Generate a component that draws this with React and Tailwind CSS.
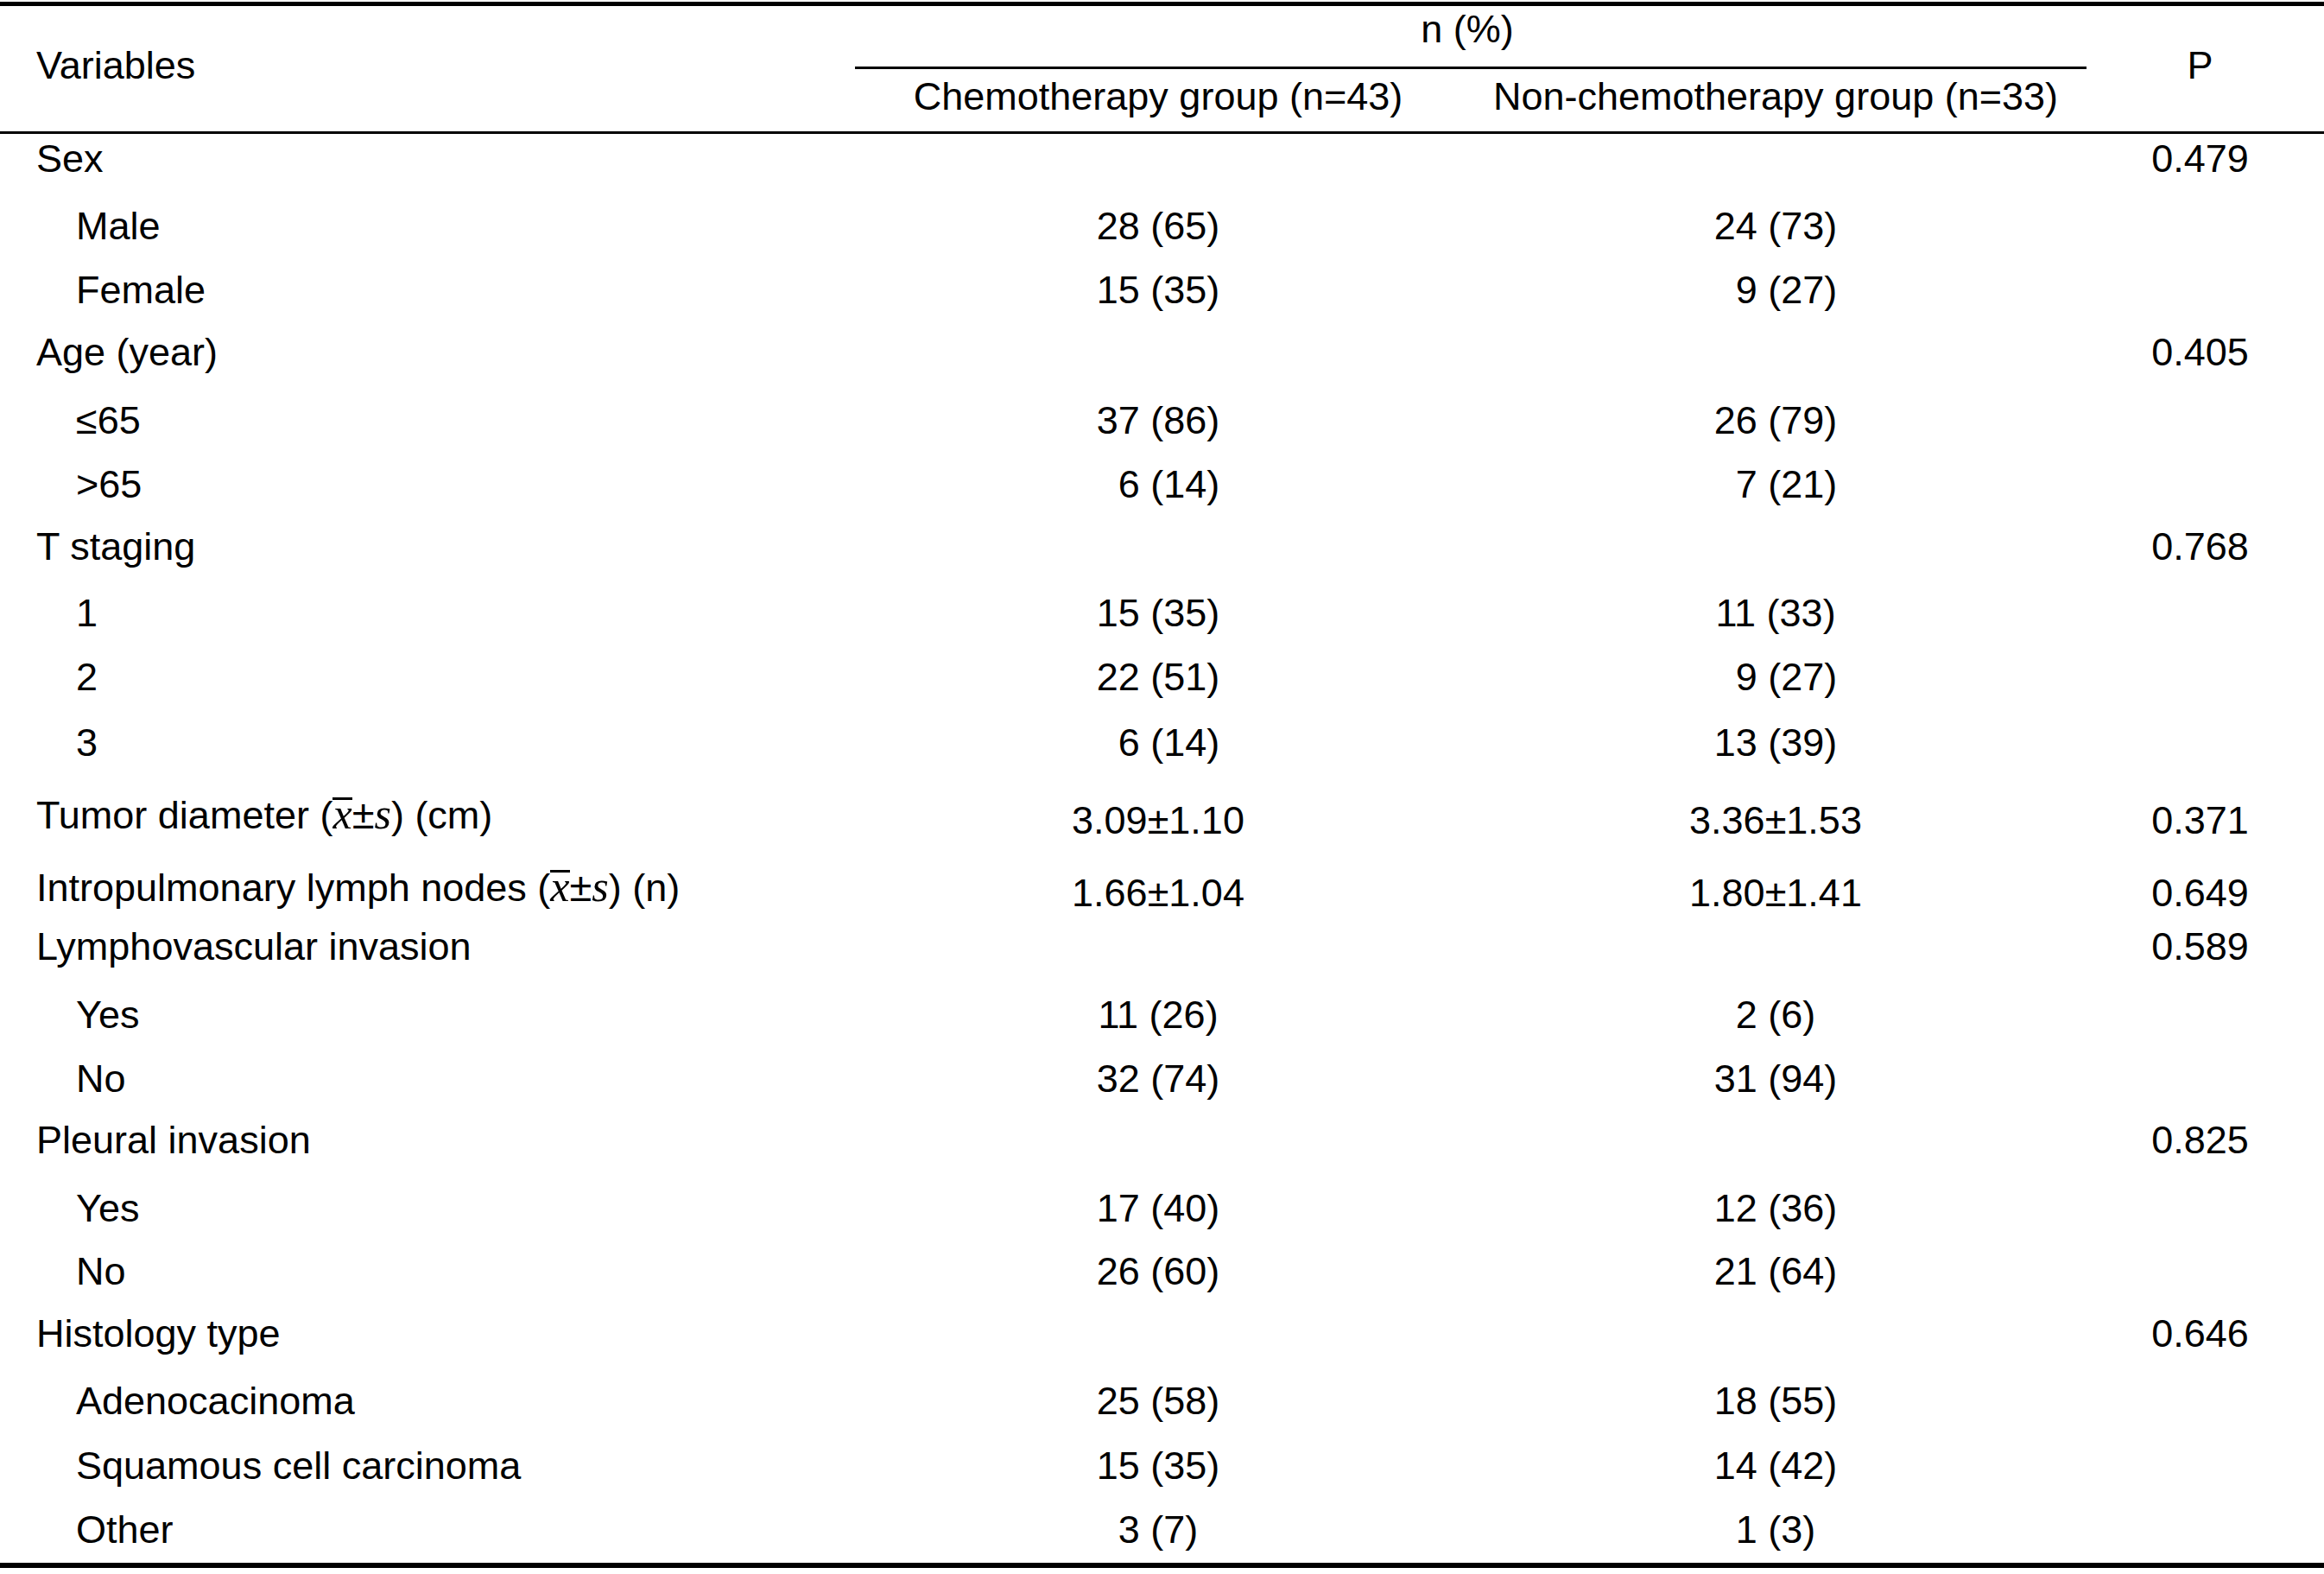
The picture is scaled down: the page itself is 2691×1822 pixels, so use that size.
import React from 'react';

// Baseline characteristics table, chemotherapy vs non-chemotherapy
const rows = [
  { label: 'Sex', p: '0.479', h: 'h-[78px]' },
  { label: 'Male', sub: true, a: '28 (65)', b: '24 (73)', h: 'h-[74px]' },
  { label: 'Female', sub: true, a: '15 (35)', b: '9 (27)', h: 'h-[72px]' },
  { label: 'Age (year)', p: '0.405', h: 'h-[79px]' },
  { label: '≤65', sub: true, a: '37 (86)', b: '26 (79)', h: 'h-[74px]' },
  { label: '>65', sub: true, a: '6 (14)', b: '7 (21)', h: 'h-[72px]' },
  { label: 'T staging', p: '0.768', h: 'h-[77px]' },
  { label: '1', sub: true, a: '15 (35)', b: '11 (33)', h: 'h-[74px]' },
  { label: '2', sub: true, a: '22 (51)', b: '9 (27)', h: 'h-[76px]' },
  { label: '3', sub: true, a: '6 (14)', b: '13 (39)', h: 'h-[82px]' },
  { label: 'tumor', a: '3.09±1.10', b: '3.36±1.53', p: '0.371', h: 'h-[84px]', shift: true },
  { label: 'nodes', a: '1.66±1.04', b: '1.80±1.41', p: '0.649', h: 'h-[70px]', shift: true },
  { label: 'Lymphovascular invasion', p: '0.589', h: 'h-[79px]' },
  { label: 'Yes', sub: true, a: '11 (26)', b: '2 (6)', h: 'h-[74px]' },
  { label: 'No', sub: true, a: '32 (74)', b: '31 (94)', h: 'h-[71px]' },
  { label: 'Pleural invasion', p: '0.825', h: 'h-[79px]' },
  { label: 'Yes', sub: true, a: '17 (40)', b: '12 (36)', h: 'h-[73px]' },
  { label: 'No', sub: true, a: '26 (60)', b: '21 (64)', h: 'h-[72px]' },
  { label: 'Histology type', p: '0.646', h: 'h-[78px]' },
  { label: 'Adenocacinoma', sub: true, a: '25 (58)', b: '18 (55)', h: 'h-[75px]' },
  { label: 'Squamous cell carcinoma', sub: true, a: '15 (35)', b: '14 (42)', h: 'h-[74px]' },
  { label: 'Other', sub: true, a: '3 (7)', b: '1 (3)', h: 'h-[64px]' },
];

const cols = 'grid grid-cols-[990px_712px_714px_275px]';

function MeanSd() {
  return (
    <span className="text-[50px] font-['Liberation_Serif','Times_New_Roman',serif]">
      <span className="inline-block italic leading-[0.64] border-t-[3px] border-black">x</span>
      <span className="font-['Liberation_Sans',Arial,sans-serif] text-[47px]">±</span>
      <span className="italic">s</span>
    </span>
  );
}

function Label({ label }) {
  if (label === 'tumor') {
    return (
      <>
        Tumor diameter (<MeanSd />) (cm)
      </>
    );
  }
  if (label === 'nodes') {
    return (
      <>
        Intropulmonary lymph nodes (<MeanSd />) (n)
      </>
    );
  }
  return label;
}

// single-digit count with two-digit percentage gets a figure-width pad, as in the source
function Val({ v }) {
  if (!v) return null;
  const pad = /^\d \(\d\d\)$/.test(v);
  return (
    <span className="whitespace-pre">
      {pad && <span className="inline-block w-[0.556em]" />}
      {v}
    </span>
  );
}

export default function App() {
  return (
    <div className="bg-white pt-[2px] text-black text-[45px] leading-[52px] font-['Liberation_Sans',Arial,sans-serif]">
      <div className="border-t-[5px] border-b-[6px] border-black">
        {/* header */}
        <div className={`${cols} h-[148px] border-b-[3px] border-black`}>
          <div className="pl-[42px] pt-[43px]">Variables</div>
          <div className="col-span-2 flex flex-col">
            <div className="h-[73px] pt-[1px] pr-[8px] text-center border-b-[3px] border-black">n (%)</div>
            <div className="grid grid-cols-[712px_714px]">
              <div className="pt-[6px] pr-[10px] text-center">Chemotherapy group (n=43)</div>
              <div className="pt-[6px] pr-[6px] text-center">Non-chemotherapy group (n=33)</div>
            </div>
          </div>
          <div className="pt-[43px] pr-[12px] text-center">P</div>
        </div>

        {/* body */}
        <div className="pt-[3px]">
          {rows.map((r, i) => (
            <div key={i} className={`${cols} ${r.h}`}>
              <div className={r.sub ? 'pl-[88px]' : 'pl-[42px]'}>
                <Label label={r.label} />
              </div>
              <div className={`pr-[10px] text-center ${r.shift ? 'pt-[8px]' : ''}`}>
                <Val v={r.a} />
              </div>
              <div className={`pr-[6px] text-center ${r.shift ? 'pt-[8px]' : ''}`}>
                <Val v={r.b} />
              </div>
              <div className={`pr-[12px] text-center ${r.shift ? 'pt-[8px]' : ''}`}>{r.p}</div>
            </div>
          ))}
        </div>
      </div>
    </div>
  );
}
